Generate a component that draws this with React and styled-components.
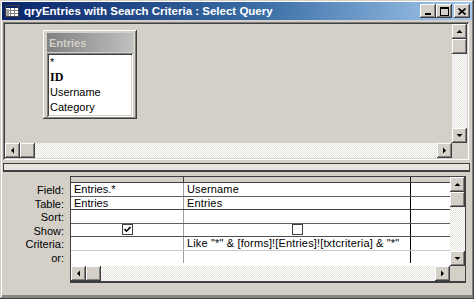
import React from 'react';
import { styled, createGlobalStyle } from 'styled-components';

const GlobalStyle = createGlobalStyle`
  html, body {
    margin: 0;
    padding: 0;
    background: #d4d0c8;
  }
  * {
    box-sizing: border-box;
  }
`;

const face = '#d4d0c8';
const raised = `
  background: ${face};
  box-shadow: inset -1px -1px #404040, inset 1px 1px #ffffff,
    inset -2px -2px #808080, inset 2px 2px ${face};
`;

const Window = styled.div`
  width: 474px;
  height: 299px;
  padding: 2px 2px 1px 2px;
  background: ${face};
  box-shadow: inset -1px -1px #404040, inset 1px 1px ${face},
    inset -2px -2px #808080, inset 2px 2px #ffffff;
  display: flex;
  flex-direction: column;
  font-family: 'Liberation Sans', Arial, sans-serif;
  font-size: 11px;
  color: #000;
  overflow: hidden;
`;

const TitleBar = styled.div`
  height: 18px;
  flex-shrink: 0;
  display: flex;
  align-items: center;
  padding: 0 2px 0 3px;
  background: linear-gradient(to right, #0a246a 0%, #3a6ea5 55%, #a6caf0 100%);
`;

const TitleText = styled.span`
  flex: 1;
  margin-left: 5px;
  color: #fff;
  font-weight: bold;
  font-size: 11.5px;
  white-space: nowrap;
`;

const Controls = styled.div`
  display: flex;
  align-items: center;
`;

const CtrlButton = styled.div`
  ${raised}
  width: 16px;
  height: 14px;
  display: flex;
  align-items: center;
  justify-content: center;
  margin-left: ${(p) => (p.$gap ? '2px' : '0')};
`;

const UpperPane = styled.div`
  margin: 2px 3px 0 1px;
  height: 138px;
  flex-shrink: 0;
  display: flex;
  flex-direction: column;
  padding: 2px;
  background: ${face};
  box-shadow: inset 1px 1px #808080, inset -1px -1px #ffffff,
    inset 2px 2px #404040, inset -2px -2px ${face};
`;

const PaneBody = styled.div`
  flex: 1;
  display: flex;
  min-height: 0;
`;

const Canvas = styled.div`
  flex: 1;
  position: relative;
`;

const FieldList = styled.div`
  ${raised}
  position: absolute;
  left: 38px;
  top: 6px;
  width: 94px;
  height: 89px;
  padding: 3px 4px 3px 4px;
  display: flex;
  flex-direction: column;
`;

const ListTitle = styled.div`
  height: 19px;
  flex-shrink: 0;
  padding-left: 2px;
  display: flex;
  align-items: center;
  font-weight: bold;
  color: #d4d0c8;
  background: linear-gradient(to right, #808080, #c0c0c0);
`;

const ListBox = styled.div`
  flex: 1;
  margin-top: 1px;
  padding: 2px;
  background: #fff;
  box-shadow: inset 1px 1px #808080, inset -1px -1px #ffffff,
    inset 2px 2px #404040, inset -2px -2px ${face};
`;

const ListItem = styled.div`
  height: 15px;
  line-height: 15px;
  padding-left: 1px;
  white-space: nowrap;
  font-family: ${(p) => (p.$key ? "'Liberation Serif', 'Times New Roman', serif" : 'inherit')};
  font-weight: ${(p) => (p.$key ? 'bold' : 'normal')};
  font-size: ${(p) => (p.$key ? '12px' : '11px')};
`;

const Track = styled.div`
  flex: 1;
  background: repeating-conic-gradient(#ffffff 0 25%, #e4e2dd 0 50%) 0 0 / 2px 2px;
`;

const VScroll = styled.div`
  width: 15px;
  display: flex;
  flex-direction: column;
`;

const HScrollRow = styled.div`
  height: 15px;
  flex-shrink: 0;
  display: flex;
`;

const HScroll = styled.div`
  flex: 1;
  display: flex;
`;

const Corner = styled.div`
  width: 15px;
  background: ${face};
`;

const Btn = styled.div`
  ${raised}
  width: 15px;
  height: 15px;
  flex-shrink: 0;
  display: flex;
  align-items: center;
  justify-content: center;
`;

const Thumb = styled(Btn)``;

const Splitter = styled.div`
  margin: 3px 2px 0 1px;
  height: 9px;
  flex-shrink: 0;
  border: 1px solid #404040;
  border-bottom-width: 2px;
  background: #e6e4df;
`;

const LowerPane = styled.div`
  flex: 1;
  display: flex;
  padding: 4px 6px 0 1px;
  border-bottom: 3px solid #8a8780;
`;

const Labels = styled.div`
  width: 67px;
  padding-top: 8px;
  padding-right: 6px;
  display: flex;
  flex-direction: column;
  align-items: flex-end;
`;

const Label = styled.div`
  height: 13.5px;
  line-height: 13.5px;
`;

const Grid = styled.div`
  flex: 1;
  height: 107px;
  border: 1px solid #404040;
  border-bottom-width: 2px;
  display: flex;
  flex-direction: column;
  background: #fff;
`;

const GridBody = styled.div`
  flex: 1;
  display: flex;
  min-height: 0;
`;

const Columns = styled.div`
  flex: 1;
  display: flex;
  flex-direction: column;
`;

const Row = styled.div`
  display: flex;
  height: ${(p) => p.$h || '13.5px'};
  border-bottom: 1px solid ${(p) => p.$line || 'transparent'};
  background: ${(p) => (p.$head ? face : '#fff')};
`;

const Cell = styled.div`
  width: ${(p) => p.$w};
  flex: ${(p) => (p.$w ? 'none' : '1')};
  border-right: 1px solid ${(p) => p.$sep || 'transparent'};
  padding-left: 3px;
  display: flex;
  align-items: center;
  justify-content: ${(p) => (p.$center ? 'center' : 'flex-start')};
  white-space: nowrap;
  overflow: hidden;
  letter-spacing: ${(p) => (p.$wide ? '0.15px' : 'normal')};
`;

const Check = styled.div`
  width: 11px;
  height: 11px;
  border: 1px solid #404040;
  background: #fff;
  display: flex;
  align-items: center;
  justify-content: center;
  margin-left: -3px;
`;

const Arrow = ({ dir }) => {
  const pts = {
    up: '0.5,4 3.5,1 6.5,4',
    down: '0.5,1 3.5,4 6.5,1',
    left: '4,0.5 1,3.5 4,6.5',
    right: '1,0.5 4,3.5 1,6.5',
  }[dir];
  const vertical = dir === 'up' || dir === 'down';
  return (
    <svg width={vertical ? 7 : 5} height={vertical ? 5 : 7} viewBox={vertical ? '0 0 7 5' : '0 0 5 7'}>
      <polygon points={pts} fill="#000" />
    </svg>
  );
};

const TitleIcon = () => (
  <svg width="14" height="12" viewBox="0 0 14 12">
    <rect x="0.5" y="0.5" width="13" height="11" fill="#fff" stroke="#404040" />
    <rect x="1" y="1" width="12" height="2" fill="#0a246a" />
    <path d="M1 5.5h12M1 8.5h12M5.5 3v8M9.5 3v8" stroke="#808080" />
    <rect x="1" y="4" width="3" height="7" fill="#a0a0a0" />
  </svg>
);

const fields = [
  ['Field:', 'Entries.*', 'Username', '#606060'],
  ['Table:', 'Entries', 'Entries', '#404040'],
  ['Sort:', '', '', '#606060'],
  ['Show:', 'check', 'box', '#505050'],
  ['Criteria:', '', 'Like "*" & [forms]![Entries]![txtcriteria] & "*"', '#c8c8c8'],
  ['or:', '', '', 'transparent'],
];

const renderValue = (v) => {
  if (v === 'check')
    return (
      <Check>
        <svg width="7" height="7" viewBox="0 0 7 7">
          <polyline points="0.5,3 2.5,5.2 6.5,1" fill="none" stroke="#000" strokeWidth="1.6" />
        </svg>
      </Check>
    );
  if (v === 'box') return <Check />;
  return v;
};

const App = () => {
  return (
    <>
      <GlobalStyle />
      <Window>
        <TitleBar>
          <TitleIcon />
          <TitleText>qryEntries with Search Criteria : Select Query</TitleText>
          <Controls>
            <CtrlButton>
              <svg width="8" height="8" viewBox="0 0 8 8">
                <rect x="1" y="6" width="6" height="2" fill="#000" />
              </svg>
            </CtrlButton>
            <CtrlButton>
              <svg width="9" height="9" viewBox="0 0 9 9">
                <rect x="0.5" y="0.5" width="8" height="8" fill="none" stroke="#000" />
                <rect x="0" y="0" width="9" height="2" fill="#000" />
              </svg>
            </CtrlButton>
            <CtrlButton $gap>
              <svg width="8" height="7" viewBox="0 0 8 7">
                <path d="M0.5 0.5L7.5 6.5M7.5 0.5L0.5 6.5" stroke="#000" strokeWidth="1.6" />
              </svg>
            </CtrlButton>
          </Controls>
        </TitleBar>

        <UpperPane>
          <PaneBody>
            <Canvas>
              <FieldList>
                <ListTitle>Entries</ListTitle>
                <ListBox>
                  <ListItem>*</ListItem>
                  <ListItem $key>ID</ListItem>
                  <ListItem>Username</ListItem>
                  <ListItem>Category</ListItem>
                </ListBox>
              </FieldList>
            </Canvas>
            <VScroll>
              <Btn><Arrow dir="up" /></Btn>
              <Thumb />
              <Track />
              <Btn><Arrow dir="down" /></Btn>
            </VScroll>
          </PaneBody>
          <HScrollRow>
            <HScroll>
              <Btn><Arrow dir="left" /></Btn>
              <Thumb />
              <Track />
              <Btn><Arrow dir="right" /></Btn>
            </HScroll>
            <Corner />
          </HScrollRow>
        </UpperPane>

        <Splitter />

        <LowerPane>
          <Labels>
            {fields.map(([label]) => (
              <Label key={label}>{label}</Label>
            ))}
          </Labels>
          <Grid>
            <GridBody>
              <Columns>
                <Row $head $h="6px" $line="#404040">
                  <Cell $w="113px" $sep="#404040" />
                  <Cell $w="227px" $sep="#000" />
                  <Cell />
                </Row>
                {fields.map(([label, a, b, line]) => (
                  <Row key={label} $line={line}>
                    <Cell $w="113px" $sep="#a0a0a0" $center={a === 'check'}>
                      {renderValue(a)}
                    </Cell>
                    <Cell $w="227px" $sep="#000" $center={b === 'box'} $wide>
                      {renderValue(b)}
                    </Cell>
                    <Cell />
                  </Row>
                ))}
              </Columns>
              <VScroll>
                <Btn><Arrow dir="up" /></Btn>
                <Thumb />
                <Track />
                <Btn><Arrow dir="down" /></Btn>
              </VScroll>
            </GridBody>
            <HScrollRow>
              <HScroll>
                <Btn><Arrow dir="left" /></Btn>
                <Thumb />
                <Track />
                <Btn><Arrow dir="right" /></Btn>
              </HScroll>
              <Corner />
            </HScrollRow>
          </Grid>
        </LowerPane>
      </Window>
    </>
  );
};

export default App;
